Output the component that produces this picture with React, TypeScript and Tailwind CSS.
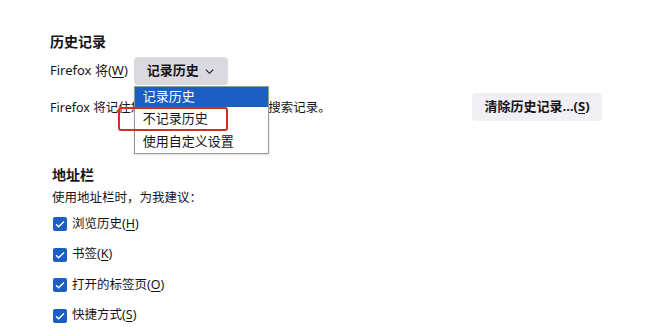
import React from 'react';

const FONT = { fontFamily: '"Noto Sans", "Noto Sans CJK SC", sans-serif' };

const SUGGESTIONS = [
	{ label: '浏览历史', key: 'H' },
	{ label: '书签', key: 'K' },
	{ label: '打开的标签页', key: 'O' },
	{ label: '快捷方式', key: 'S' }
];

function Check() {
	return (
		<span className="flex h-[14px] w-[14px] shrink-0 items-center justify-center rounded-[2px] bg-[#1b5fc4]">
			<svg width="12" height="12" viewBox="0 0 12 12" fill="none" stroke="white" strokeWidth="1.4">
				<path d="M2 6.2l2.6 2.6L10 3.4" />
			</svg>
		</span>
	);
}

function AccessKey({ k }: { k: string }) {
	return (
		<>
			(<span className="underline underline-offset-2">{k}</span>)
		</>
	);
}

export default function App() {
	return (
		<div className="min-h-[328px] w-[650px] bg-white pl-[50px] pt-[31px] text-[#15141a]" style={FONT}>
			<h2 className="text-[14px] font-bold leading-[22px]">历史记录</h2>

			<div className="mt-[4px] flex items-center gap-[6px] text-[13px]">
				<span>
					Firefox 将<AccessKey k="W" />
				</span>
				<div className="relative">
					<button className="flex h-[28px] w-[94px] items-center justify-center gap-[5px] rounded-[4px] bg-[#d9d9df] text-[13px] font-bold">
						记录历史
						<svg width="11" height="11" viewBox="0 0 12 12" fill="none" stroke="currentColor" strokeWidth="1.2">
							<path d="M2 4l4 4 4-4" />
						</svg>
					</button>
					<ul className="absolute left-0 top-[29px] z-10 w-[135px] border border-[#9a9a9a] bg-white text-[13px] shadow-sm">
						<li className="flex h-[20px] items-center bg-[#1b5fc4] px-[8px] text-white">记录历史</li>
						<li className="flex h-[23px] items-center px-[8px]">不记录历史</li>
						<li className="flex h-[23px] items-center px-[8px]">使用自定义设置</li>
					</ul>
					<div className="absolute left-[-16px] top-[50px] z-20 h-[24px] w-[110px] rounded-[3px] border-2 border-[#cf2f26]" />
				</div>
			</div>

			<div className="mt-[8px] flex w-[552px] items-center justify-between">
				<span className="pt-[3px] text-[12.5px]">Firefox 将记住您的浏览、下载、表单和搜索记录。</span>
				<button className="h-[28px] w-[130px] rounded-[4px] bg-[#f0f0f4] text-[13px] font-bold">
					清除历史记录…<AccessKey k="S" />
				</button>
			</div>

			<h2 className="mt-[43px] pl-[2px] text-[14px] font-bold leading-[22px]">地址栏</h2>
			<p className="mt-[2px] pl-[2px] text-[12.5px] leading-[20px]">使用地址栏时，为我建议：</p>

			<ul className="mt-[1px] pl-[3px] text-[12.5px]">
				{SUGGESTIONS.map((s) => (
					<li key={s.key} className="flex h-[30.5px] items-center gap-[5px]">
						<Check />
						<span>
							{s.label}
							<AccessKey k={s.key} />
						</span>
					</li>
				))}
			</ul>
		</div>
	);
}
